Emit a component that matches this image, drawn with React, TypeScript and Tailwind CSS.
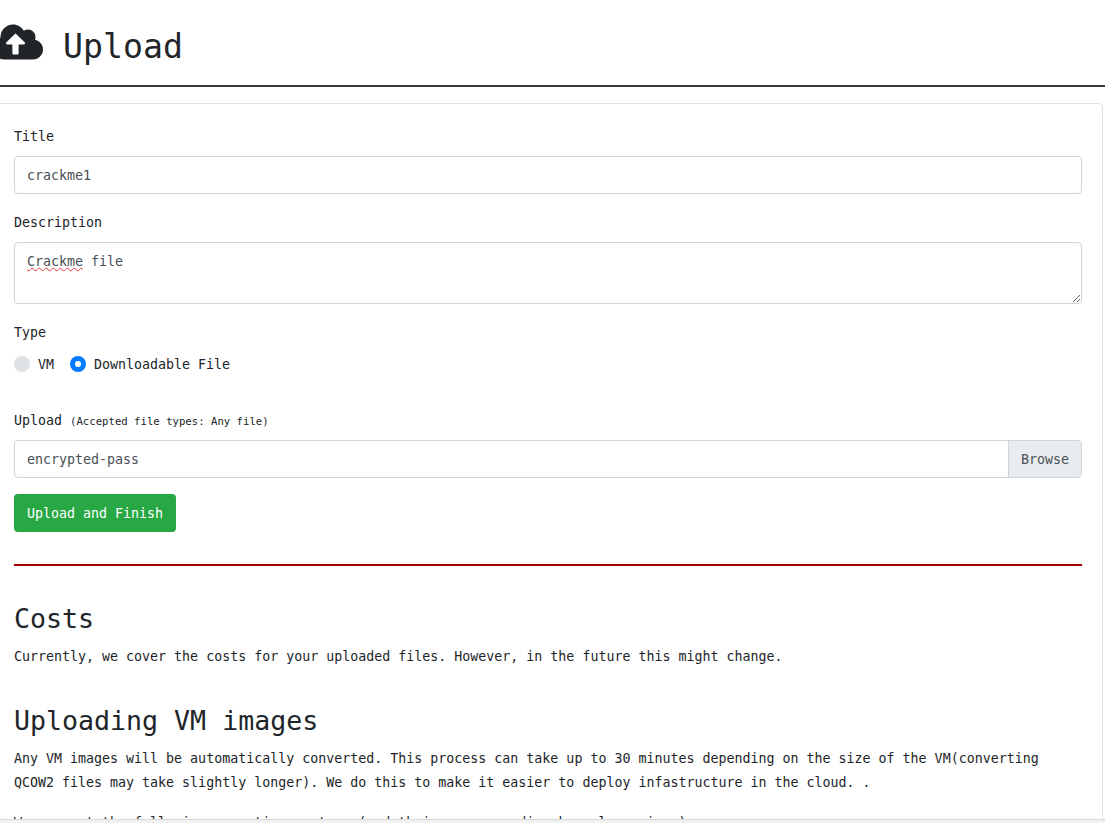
import { FaCloudUploadAlt } from "react-icons/fa";

export default function App() {
  return (
    <div className="h-[823px] w-[1105px] flex flex-col overflow-hidden bg-white text-[#212529] text-[13.3px] leading-6 font-['DejaVu_Sans_Mono',monospace]">
      <main className="flex-1 min-h-0 overflow-hidden">
        <header className="h-[85px] flex items-start">
          <FaCloudUploadAlt className="w-[50px] h-[40px] shrink-0 -ml-[7px] mt-[22px]" />
          <h1 className="ml-5 mt-[23px] text-[33.2px] leading-[48px] font-normal">Upload</h1>
        </header>
        <hr className="border-0 h-0.5 bg-[#343a40]" />
        <section className="mt-4 -ml-[7px] w-[1110px] border border-[#dfdfdf] rounded p-5">
          <form>
            <label className="block h-6 pt-px mb-2">Title</label>
            <input
              defaultValue="crackme1"
              className="block w-full h-[38px] px-3 border border-[#ced4da] rounded text-[#495057] outline-none"
            />
            <label className="block h-6 pt-px mt-4 mb-2">Description</label>
            <div className="relative">
              <textarea
                defaultValue="Crackme file"
                spellCheck={false}
                className="block w-full h-[62px] px-3 pt-[7px] pb-1.5 border border-[#ced4da] rounded text-[#495057] outline-none resize-y"
              />
              <span
                aria-hidden="true"
                className="absolute left-[13px] top-[8px] text-transparent underline decoration-wavy decoration-[#e53935] decoration-1 pointer-events-none"
              >
                Crackme
              </span>
            </div>
            <label className="block h-6 pt-px mt-4 mb-2">Type</label>
            <div className="flex items-center h-6">
              <span className="w-4 h-4 rounded-full bg-[#dee2e6]" />
              <span className="ml-2 pt-0.5">VM</span>
              <span className="ml-4 w-4 h-4 rounded-full bg-[#007bff] flex items-center justify-center">
                <span className="w-1.5 h-1.5 rounded-full bg-white" />
              </span>
              <span className="ml-2 pt-0.5">Downloadable File</span>
            </div>
            <label className="block h-6 pt-px mt-8 mb-2">
              Upload <small className="text-[10.65px]">(Accepted file types: Any file)</small>
            </label>
            <div className="flex h-[38px] border border-[#ced4da] rounded overflow-hidden text-[#495057]">
              <div className="flex-1 px-3 pt-px leading-9">encrypted-pass</div>
              <div className="px-3 pt-px leading-9 bg-[#e9ecef] border-l border-[#ced4da]">Browse</div>
            </div>
            <button
              type="button"
              className="block mt-4 h-[38px] px-[13px] pt-0.5 rounded bg-[#28a745] text-white"
            >
              Upload and Finish
            </button>
          </form>
          <hr className="mt-8 mb-[34px] border-0 h-0.5 bg-[#a00000]" />
          <h2 className="text-[26.6px] leading-[38px] font-normal mb-[7px]">Costs</h2>
          <p>Currently, we cover the costs for your uploaded files. However, in the future this might change.</p>
          <h2 className="mt-[33px] text-[26.6px] leading-[38px] font-normal mb-[7px]">Uploading VM images</h2>
          <p>
            Any VM images will be automatically converted. This process can take up to 30 minutes depending on the size of the VM(converting QCOW2 files may take slightly longer). We do this to make it easier to deploy infastructure in the cloud. .
          </p>
          <p className="mt-4">We support the following operating systems (and their corresponding kernel versions):</p>
        </section>
      </main>
      <div className="h-1 shrink-0 border-t border-[#d9d9d9] bg-[#f1f1f1]" />
    </div>
  );
}
